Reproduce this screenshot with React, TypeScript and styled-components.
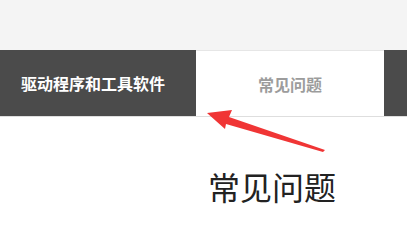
import React from 'react';
import styled, { createGlobalStyle } from 'styled-components';

const GlobalStyle = createGlobalStyle`
  html, body {
    margin: 0;
    padding: 0;
    background: #fff;
    font-family: "Microsoft YaHei", "Noto Sans CJK SC", "Noto Sans", sans-serif;
  }
`;

const tabs = [
  { label: '驱动程序和工具软件', active: false },
  { label: '常见问题', active: true },
];

function App() {
  return (
    <Page>
      <GlobalStyle />
      <TopStrip />
      <TabBar>
        {tabs.map((t) => (
          <Tab key={t.label} $active={t.active}>
            {t.label}
          </Tab>
        ))}
      </TabBar>
      <Divider />
      <Content>
        <Title>常见问题</Title>
      </Content>
      <Arrow viewBox="0 0 407 243" width="407" height="243">
        <polygon
          points="207,113 232,110 229,117 325,150 323,152 226,124 225,129"
          fill="#f03535"
        />
      </Arrow>
    </Page>
  );
}

const Page = styled.div`
  position: relative;
  width: 407px;
  height: 243px;
  overflow: hidden;
`;

const TopStrip = styled.div`
  height: 50px;
  background: #f4f4f4;
`;

const TabBar = styled.div`
  display: flex;
  height: 66px;
  background: #4b4b4b;
`;

const Tab = styled.div<{ $active: boolean }>`
  display: flex;
  align-items: center;
  justify-content: center;
  box-sizing: border-box;
  width: ${(p) => (p.$active ? '188px' : '196px')};
  padding-right: ${(p) => (p.$active ? '0' : '10px')};
  font-size: 16px;
  font-weight: 700;
  color: ${(p) => (p.$active ? '#9c9c9c' : '#ffffff')};
  background: ${(p) => (p.$active ? '#ffffff' : 'transparent')};
  border-top: ${(p) => (p.$active ? '1px solid #e6e6e6' : 'none')};
`;

const Divider = styled.div`
  height: 1px;
  background: #dedede;
`;

const Content = styled.div`
  display: flex;
  justify-content: flex-end;
  padding: 49px 71px 0 0;
`;

const Title = styled.h1`
  margin: 0;
  font-size: 32px;
  font-weight: 400;
  line-height: 40px;
  color: #222;
`;

const Arrow = styled.svg`
  position: absolute;
  left: 0;
  top: 0;
  pointer-events: none;
`;

export default App;
